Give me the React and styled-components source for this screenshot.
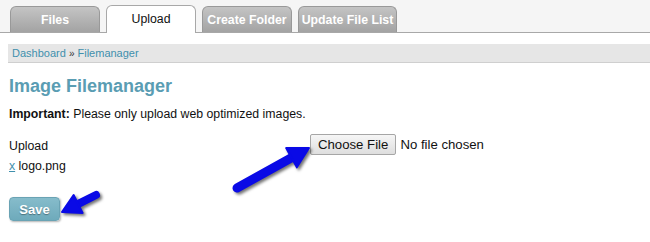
import React from 'react';
import styled, { createGlobalStyle } from 'styled-components';

const GlobalStyle = createGlobalStyle`
  body {
    margin: 0;
    background: #fff;
    font-family: "Liberation Sans", Arial, sans-serif;
    color: #111;
  }
`;

const Styled = {
  Page: styled.div`
    position: relative;
    width: 650px;
    height: 242px;
    overflow: hidden;
  `,
  TabBar: styled.div`
    height: 33px;
    background: #f5f5f5;
    border-bottom: 1px solid #a8a8a8;
    box-sizing: border-box;
    display: flex;
    align-items: flex-end;
    gap: 6px;
    padding-left: 10px;
  `,
  Tab: styled.div`
    width: ${p => p.width || 90}px;
    height: ${p => (p.active ? 28 : 26)}px;
    margin-bottom: ${p => (p.active ? -1 : 0)}px;
    box-sizing: border-box;
    border: 1px solid ${p => (p.active ? '#a8a8a8' : '#999')};
    border-bottom: none;
    border-radius: 6px 6px 0 0;
    background: ${p => (p.active ? '#fff' : 'linear-gradient(#c4c4c4, #a3a3a3)')};
    color: ${p => (p.active ? '#111' : '#fff')};
    font-size: 12.3px;
    font-weight: ${p => (p.active ? 'normal' : 'bold')};
    display: flex;
    align-items: center;
    justify-content: center;
    padding-bottom: ${p => (p.active ? 1 : 0)}px;
  `,
  Content: styled.div`
    padding-left: 8px;
  `,
  Breadcrumb: styled.div`
    margin-top: 11px;
    height: 19px;
    box-sizing: border-box;
    background: #e6e6e6;
    border-bottom: 1px solid #cfcfcf;
    padding-left: 4px;
    font-size: 11px;
    line-height: 18px;
    color: #3f90ad;
  `,
  Sep: styled.span`
    color: #333;
    font-size: 10px;
  `,
  Heading: styled.h1`
    margin: 12px 0 0 1px;
    font-size: 18px;
    line-height: 22px;
    font-weight: bold;
    color: #5a9db3;
  `,
  Note: styled.p`
    margin: 10px 0 0 1px;
    font-size: 12.3px;
    line-height: 15px;
  `,
  Form: styled.div`
    margin-top: 12px;
    display: grid;
    grid-template-columns: 301px auto;
    align-items: start;
    padding-left: 1px;
  `,
  Label: styled.div`
    font-size: 12.3px;
    line-height: 18px;
    margin-top: ${p => p.gap || 3}px;
  `,
  FileRow: styled.div`
    display: flex;
    align-items: center;
    gap: 4px;
    font-size: 13.2px;
  `,
  ChooseButton: styled.button`
    font-family: "Liberation Sans", Arial, sans-serif;
    font-size: 13.2px;
    height: 21px;
    padding: 0 7px;
    border: 1px solid #a6a6a6;
    border-radius: 2px;
    background: linear-gradient(#f6f6f6, #dedede);
    color: #111;
  `,
  Remove: styled.a`
    color: #3f90ad;
    text-decoration: underline;
  `,
  Save: styled.button`
    margin: 22px 0 0 1px;
    width: 51px;
    height: 24px;
    border: 1px solid #6aa3b4;
    border-radius: 4px;
    background: linear-gradient(#86bccb, #6eaabb);
    box-shadow: 1px 1px 2px rgba(0, 0, 0, 0.3);
    color: #fff;
    font-family: "Liberation Sans", Arial, sans-serif;
    font-size: 13px;
    font-weight: bold;
    text-shadow: 0 1px 1px rgba(0, 0, 0, 0.35);
  `,
  Overlay: styled.svg`
    position: absolute;
    left: 0;
    top: 0;
    pointer-events: none;
    filter: drop-shadow(2px 2px 1.5px rgba(0, 0, 0, 0.55));
  `
};

const Arrow = ({ tail, tip, head = 20, half = 11, width = 9 }) => {
  const dx = tip[0] - tail[0];
  const dy = tip[1] - tail[1];
  const len = Math.hypot(dx, dy);
  const ux = dx / len;
  const uy = dy / len;
  const cx = tip[0] - ux * head;
  const cy = tip[1] - uy * head;
  const pts = [
    [tip[0], tip[1]],
    [cx - uy * half, cy + ux * half],
    [cx + uy * half, cy - ux * half]
  ];
  return (
    <g fill="#0a0ae6" stroke="#0a0ae6">
      <line
        x1={tail[0]}
        y1={tail[1]}
        x2={cx + ux * 2}
        y2={cy + uy * 2}
        strokeWidth={width}
        strokeLinecap="round"
      />
      <polygon points={pts.map(p => p.join(',')).join(' ')} strokeWidth="2" strokeLinejoin="round" />
    </g>
  );
};

export default function App() {
  return (
    <Styled.Page>
      <GlobalStyle />
      <Styled.TabBar>
        <Styled.Tab>Files</Styled.Tab>
        <Styled.Tab active>Upload</Styled.Tab>
        <Styled.Tab>Create Folder</Styled.Tab>
        <Styled.Tab width={99}>Update File List</Styled.Tab>
      </Styled.TabBar>
      <Styled.Content>
        <Styled.Breadcrumb>
          Dashboard <Styled.Sep>»</Styled.Sep> Filemanager
        </Styled.Breadcrumb>
        <Styled.Heading>Image Filemanager</Styled.Heading>
        <Styled.Note>
          <b>Important:</b> Please only upload web optimized images.
        </Styled.Note>
        <Styled.Form>
          <div>
            <Styled.Label>Upload</Styled.Label>
            <Styled.Label gap={2}>
              <Styled.Remove>x</Styled.Remove> logo.png
            </Styled.Label>
          </div>
          <Styled.FileRow>
            <Styled.ChooseButton>Choose File</Styled.ChooseButton>
            <span>No file chosen</span>
          </Styled.FileRow>
        </Styled.Form>
        <Styled.Save>Save</Styled.Save>
      </Styled.Content>
      <Styled.Overlay width="650" height="242">
        <Arrow tail={[237, 188]} tip={[309, 148]} />
        <Arrow tail={[96, 195]} tip={[62, 212]} head={18} half={10} width={8} />
      </Styled.Overlay>
    </Styled.Page>
  );
}
